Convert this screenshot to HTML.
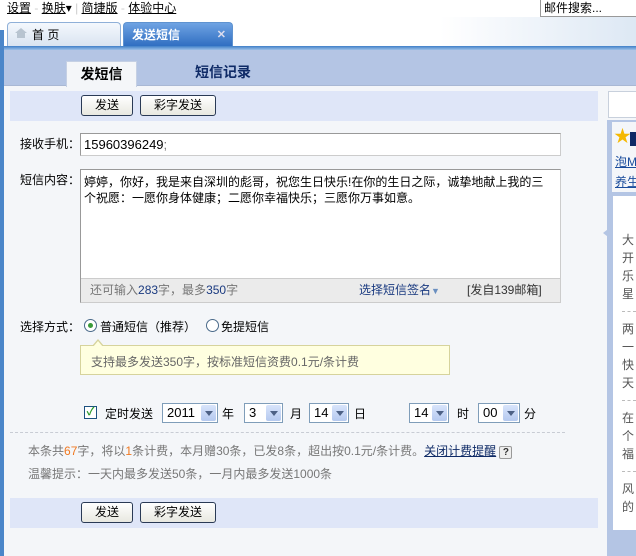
<!DOCTYPE html>
<html><head><meta charset="utf-8"><style>
*{margin:0;padding:0;box-sizing:border-box}
body{width:636px;height:556px;overflow:hidden;background:#fff;font:12px "Liberation Sans","Noto Sans CJK SC",sans-serif;color:#000;position:relative}
.a{position:absolute;white-space:nowrap}
.u{text-decoration:underline}
.btn{position:absolute;height:21px;border:1px solid #2a3a55;border-radius:3px;background:linear-gradient(#fff,#e8e8e0);text-align:center;line-height:19px;font-size:12px}
.sel{position:absolute;height:20px;border:1px solid #7f9db9;background:#fff;font-size:13px;line-height:18px;padding-left:4px}
.sel i{position:absolute;right:1px;top:1px;width:15px;height:16px;background:linear-gradient(#d8e4fb,#b5c9ef);border-radius:2px}
.sel i:after{content:"";position:absolute;left:4px;top:6px;border-left:4px solid transparent;border-right:4px solid transparent;border-top:5px solid #4d6185}
.g{color:#777}
</style></head><body>
<div class="a" style="left:7px;top:0;font-size:12px;line-height:16px"><span class="u">设置</span> <span style="color:#ccc">-</span> <span class="u">换肤</span>▾ <span style="color:#ccc">|</span> <span class="u">简捷版</span> <span style="color:#ccc">-</span> <span class="u">体验中心</span></div>
<div class="a" style="left:540px;top:0;width:100px;height:17px;border:1px solid #999;border-top:none;padding-left:3px;line-height:16px;font-size:12px">邮件搜索...</div>
<div class="a" style="left:440px;top:17px;width:196px;height:30px;background:linear-gradient(90deg,#fff,#dde8f4)"></div>
<div class="a" style="left:7px;top:22px;width:114px;height:25px;border:1px solid #8fb0d8;border-bottom:none;border-radius:4px 4px 0 0;background:linear-gradient(#f4f8fd,#d8e3f0);padding:3px 0 0 24px;font-size:12px">首 页</div>
<div class="a" style="left:15px;top:28px;width:0;height:0;border-left:6px solid transparent;border-right:6px solid transparent;border-bottom:5px solid #b8c4d0"></div>
<div class="a" style="left:17px;top:33px;width:8px;height:5px;background:#b8c4d0"></div>
<div class="a" style="left:123px;top:22px;width:110px;height:25px;border:1px solid #5f93d0;border-bottom:none;border-radius:4px 4px 0 0;background:linear-gradient(#6fa3e3,#2d6cc0);color:#fff;font-weight:bold;padding:3px 0 0 8px">发送短信<span style="position:absolute;right:6px;top:5px;font-size:11px;color:#dde">✕</span></div>
<div class="a" style="left:0;top:46px;width:636px;height:4px;background:linear-gradient(#3f7fc8,#9dc0e8)"></div>
<div class="a" style="left:0;top:30px;width:4px;height:526px;background:#4b86c9"></div>
<div class="a" style="left:4px;top:50px;width:632px;height:506px;background:#f4f6f9"></div>
<div class="a" style="left:4px;top:50px;width:632px;height:36px;background:#b4c5e4;border-bottom:1px solid #a9b8d4"></div>
<div class="a" style="left:66px;top:61px;width:71px;height:26px;background:#f4f6f9;border:1px solid #c5d0e4;border-bottom:none;text-align:center;line-height:24px;font-size:14px;font-weight:bold">发短信</div>
<div class="a" style="left:195px;top:62px;font-size:14px;font-weight:bold;color:#0e2a66">短信记录</div>
<div class="a" style="left:10px;top:91px;width:588px;height:30px;background:#dfe6f8"></div>
<div class="btn" style="left:81px;top:95px;width:52px">发送</div>
<div class="btn" style="left:140px;top:95px;width:76px">彩字发送</div>
<div class="a" style="left:608px;top:91px;width:30px;height:27px;background:#fff;border:1px solid #c8d0dc"></div>
<div class="a" style="left:607px;top:120px;width:29px;height:436px;background:#b4c5e4"></div>
<div class="a" style="left:612px;top:122px;width:24px;height:70px;background:#f4f6f9"></div>
<div class="a" style="left:614px;top:128px;color:#f5b800;font-size:17px;line-height:18px">★</div>
<div class="a" style="left:630px;top:132px;width:6px;height:14px;background:#0e2a66"></div>
<div class="a u" style="left:615px;top:152px;color:#1a4c9c;font-size:12px;line-height:20px">泡M<br>养生</div>
<div class="a" style="left:613px;top:196px;width:23px;height:334px;background:#fff"></div>
<div class="a" style="left:603px;top:226px;border-top:7px solid transparent;border-bottom:7px solid transparent;border-right:9px solid #b4c5e4"></div>
<div class="a g" style="left:622px;top:231px;font-size:12px;line-height:18px;width:14px;overflow:hidden;color:#555">大<br>开<br>乐<br>星<div style="border-top:1px dashed #bbb;margin:8px 0"></div>两<br>一<br>快<br>天<div style="border-top:1px dashed #bbb;margin:8px 0"></div>在<br>个<br>福<div style="border-top:1px dashed #bbb;margin:8px 0"></div>风<br>的</div>
<div class="a" style="left:20px;top:135px">接收手机：</div>
<div class="a" style="left:80px;top:133px;width:481px;height:23px;border:1px solid #999;border-right-color:#ccc;border-bottom-color:#ccc;background:#fff;padding:3px 0 0 3px;font-size:13px">15960396249<span class="g">;</span></div>
<div class="a" style="left:20px;top:171px">短信内容：</div>
<div class="a" style="left:80px;top:169px;width:481px;height:134px;border:1px solid #999;border-right-color:#ccc;border-bottom-color:#ccc;background:#fff;padding:4px 3px;font-size:12px;line-height:16px">婷婷，你好，我是来自深圳的彪哥，祝您生日快乐!在你的生日之际，诚挚地献上我的三<br>个祝愿：一愿你身体健康；二愿你幸福快乐；三愿你万事如意。</div>
<div class="a" style="left:81px;top:278px;width:479px;height:24px;background:#ebebeb;border-top:1px solid #ccc;line-height:22px"><span class="g" style="position:absolute;left:9px">还可输入<b style="font-weight:normal;color:#1a3a80">283</b>字，最多<b style="font-weight:normal;color:#1a3a80">350</b>字</span><span style="position:absolute;left:278px;color:#1a3a80">选择短信签名<span style="color:#6a8fc0;font-size:9px">▼</span></span><span style="position:absolute;left:386px;color:#333">[发自139邮箱]</span></div>
<div class="a" style="left:20px;top:318px">选择方式：</div>
<div class="a" style="left:84px;top:319px;width:13px;height:13px;border:1px solid #4a6a8a;border-radius:50%;background:#fff"><div style="margin:3px;width:5px;height:5px;border-radius:50%;background:#3a9a3a"></div></div>
<div class="a" style="left:100px;top:318px">普通短信（推荐）</div>
<div class="a" style="left:206px;top:319px;width:13px;height:13px;border:1px solid #4a6a8a;border-radius:50%;background:#fff"></div>
<div class="a" style="left:221px;top:318px">免提短信</div>
<div class="a" style="left:80px;top:345px;width:370px;height:30px;background:#ffffe0;border:1px solid #d6d39c;padding:7px 0 0 10px;color:#666">支持最多发送350字，按标准短信资费0.1元/条计费</div>
<div class="a" style="left:92px;top:339px;border-left:6px solid transparent;border-right:6px solid transparent;border-bottom:7px solid #d6d39c"></div>
<div class="a" style="left:93px;top:341px;border-left:5px solid transparent;border-right:5px solid transparent;border-bottom:6px solid #ffffe0"></div>
<div class="a" style="left:84px;top:406px;width:13px;height:13px;border:1px solid #1c5180;background:#fff;color:#2a9a2a;font-size:11px;line-height:11px;text-align:center;font-weight:bold">✓</div>
<div class="a" style="left:105px;top:405px">定时发送</div>
<div class="sel" style="left:162px;top:403px;width:56px">2011<i></i></div><div class="a" style="left:222px;top:405px">年</div>
<div class="sel" style="left:244px;top:403px;width:39px">3<i></i></div><div class="a" style="left:290px;top:405px">月</div>
<div class="sel" style="left:309px;top:403px;width:40px">14<i></i></div><div class="a" style="left:354px;top:405px">日</div>
<div class="sel" style="left:409px;top:403px;width:40px">14<i></i></div><div class="a" style="left:457px;top:405px">时</div>
<div class="sel" style="left:478px;top:403px;width:42px">00<i></i></div><div class="a" style="left:524px;top:405px">分</div>
<div class="a" style="left:10px;top:432px;width:555px;border-top:1px dashed #c8ccd4"></div>
<div class="a g" style="left:28px;top:442px;color:#777">本条共<span style="color:#f07820">67</span>字，将以<span style="color:#f07820">1</span>条计费，本月赠30条，已发8条，超出按0.1元/条计费。<span class="u" style="color:#0e2a66">关闭计费提醒</span> <span style="display:inline-block;width:13px;height:13px;border:1px solid #999;border-radius:2px;background:#eee;color:#333;font-size:10px;line-height:11px;text-align:center;font-weight:bold">?</span></div>
<div class="a g" style="left:28px;top:465px;color:#777">温馨提示：一天内最多发送50条，一月内最多发送1000条</div>
<div class="a" style="left:10px;top:498px;width:588px;height:30px;background:#dfe6f8"></div>
<div class="btn" style="left:81px;top:502px;width:52px">发送</div>
<div class="btn" style="left:140px;top:502px;width:76px">彩字发送</div>
</body></html>
